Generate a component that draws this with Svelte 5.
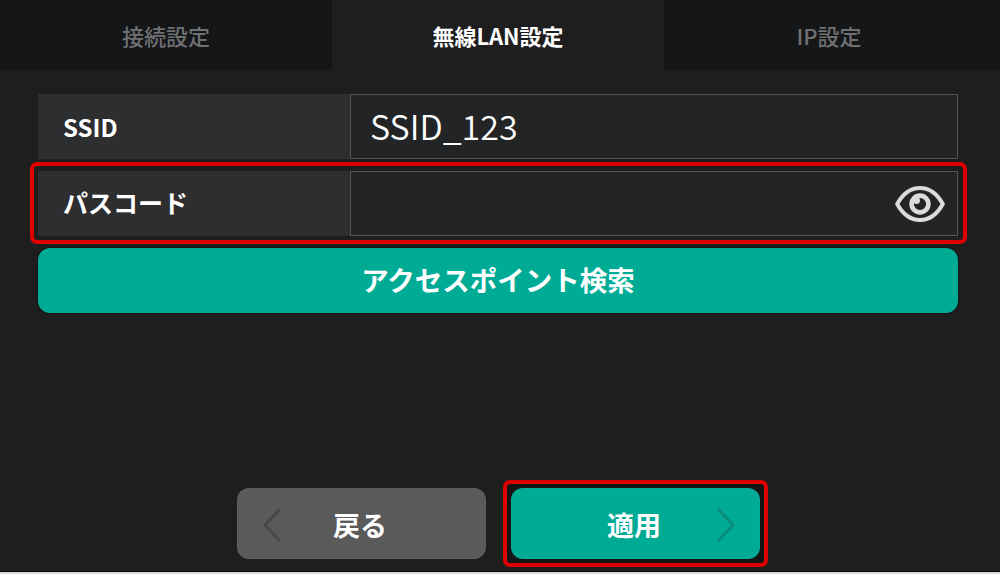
<script>
	let tabs = [
		{ label: '接続設定', active: false },
		{ label: '無線LAN設定', active: true },
		{ label: 'IP設定', active: false }
	];
</script>

<div class="screen">
	<nav class="tabs">
		{#each tabs as tab}
			<div class="tab" class:active={tab.active}>{tab.label}</div>
		{/each}
	</nav>

	<main class="form">
		<div class="row">
			<div class="label">SSID</div>
			<div class="value ssid">SSID_123</div>
		</div>
		<div class="row highlighted">
			<div class="label">パスコード</div>
			<div class="value">
				<svg class="eye" viewBox="0 0 50 38" width="50" height="38" aria-hidden="true">
					<path d="M2.200 19C8 8.500 15.500 3 25 3s17 5.500 22.800 16C42 29.500 34.500 35 25 35S8 29.500 2.200 19Z" fill="none" stroke="#dcdcdc" stroke-width="4" stroke-linejoin="round" />
					<circle cx="25" cy="19" r="8.400" fill="none" stroke="#dcdcdc" stroke-width="4.600" />
					<circle cx="21.500" cy="15.500" r="3.500" fill="#dcdcdc" />
				</svg>
			</div>
		</div>
		<button class="search">アクセスポイント検索</button>
	</main>

	<footer class="actions">
		<button class="action back">
			<svg class="chevron left" viewBox="0 0 20 36" width="20" height="36" aria-hidden="true">
				<path d="M18 2 3 18l15 16" fill="none" stroke="#484848" stroke-width="3" />
			</svg>
			戻る
		</button>
		<div class="apply-mark">
			<button class="action apply">
				適用
				<svg class="chevron right" viewBox="0 0 20 36" width="20" height="36" aria-hidden="true">
					<path d="M2 2l15 16L2 34" fill="none" stroke="#0b8c7b" stroke-width="3" />
				</svg>
			</button>
		</div>
	</footer>
	<div class="strip"></div>
</div>

<style>
	:global(body) {
		background: #1e1e1e;
	}

	.screen {
		width: 1000px;
		height: 574px;
		display: flex;
		flex-direction: column;
		background: #1e1e1f;
		font-family: 'Noto Sans CJK JP', 'Noto Sans', sans-serif;
		overflow: hidden;
	}

	.tabs {
		display: grid;
		grid-template-columns: 332px 332px 336px;
		height: 70px;
		flex-shrink: 0;
	}

	.tab {
		display: flex;
		align-items: center;
		justify-content: center;
		background: #151618;
		color: #6f7072;
		font-size: 22px;
		font-weight: 500;
	}

	.tab:last-child {
		padding-right: 6px;
	}

	.tab.active {
		background: #1e1e1f;
		color: #fff;
		font-weight: 700;
	}

	.form {
		display: flex;
		flex-direction: column;
		gap: 12px;
		padding: 24px 42px 0 38px;
	}

	.row {
		display: grid;
		grid-template-columns: 312px 608px;
		height: 65px;
		position: relative;
	}

	.row.highlighted::after {
		content: '';
		position: absolute;
		inset: -9px -9px -8px -8px;
		border: 4px solid #e00000;
		border-radius: 7px;
		pointer-events: none;
	}

	.label {
		display: flex;
		align-items: center;
		padding-left: 25px;
		background: #2d2e30;
		color: #fff;
		font-size: 25px;
		font-weight: 700;
	}

	.row:first-child .label {
		font-size: 24px;
	}

	.highlighted .label {
		padding-bottom: 3px;
	}

	.value {
		display: flex;
		align-items: center;
		justify-content: space-between;
		box-sizing: border-box;
		padding: 0 12px 0 19px;
		background: #232426;
		border: 1px solid #545557;
		color: #fff;
	}

	.ssid {
		font-size: 34px;
		font-weight: 350;
		padding-bottom: 2px;
	}

	.eye {
		margin-left: auto;
	}

	.search {
		height: 65px;
		border: none;
		border-radius: 12px;
		background: #00ab96;
		box-shadow: 0 0 2px #000;
		color: #fff;
		font-family: inherit;
		font-size: 27.500px;
		font-weight: 700;
		padding-bottom: 4px;
	}

	.actions {
		display: flex;
		align-items: center;
		gap: 17px;
		margin-top: auto;
		padding: 0 0 4px 237px;
	}

	.action {
		position: relative;
		flex-shrink: 0;
		width: 249px;
		height: 71px;
		border: none;
		border-radius: 12px;
		color: #fff;
		font-family: inherit;
		font-size: 27px;
		font-weight: 700;
		padding: 2px 3px 0 0;
		box-shadow: inset 0 0 0 1px rgba(255, 255, 255, 0.03);
	}

	.back {
		background: #5a5a5a;
	}

	.apply {
		background: #00ab96;
		display: block;
	}

	.apply-mark {
		flex-shrink: 0;
		padding: 4px;
		border: 4px solid #e00000;
		border-radius: 7px;
		background: #141414;
	}

	.chevron {
		position: absolute;
		top: 19px;
	}

	.chevron.left {
		left: 25px;
	}

	.chevron.right {
		right: 24px;
	}

	.strip {
		height: 3px;
		flex-shrink: 0;
		box-sizing: border-box;
		border-top: 1px solid #000;
		background: #d9d9d9;
	}
</style>
